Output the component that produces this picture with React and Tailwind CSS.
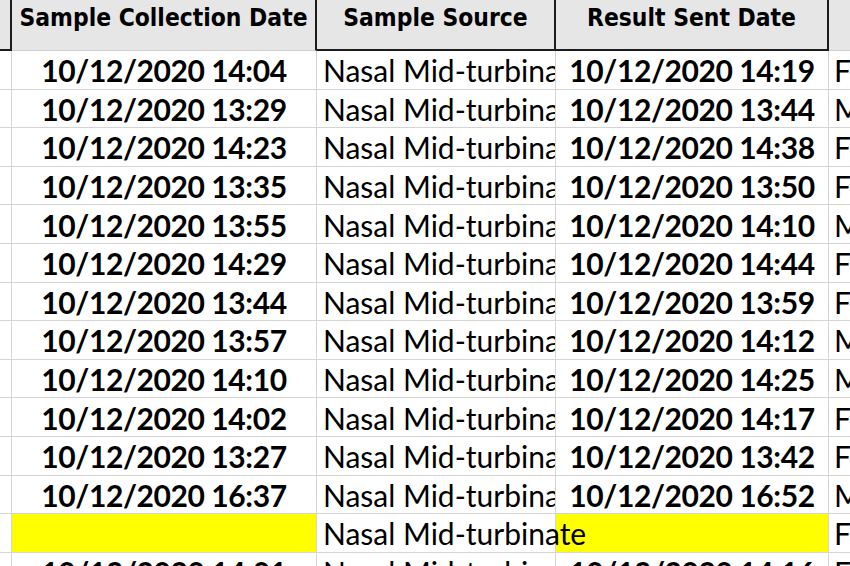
import React from "react";

const rows = [
  { collected: "10/12/2020 14:04", sent: "10/12/2020 14:19", sex: "Female" },
  { collected: "10/12/2020 13:29", sent: "10/12/2020 13:44", sex: "Male" },
  { collected: "10/12/2020 14:23", sent: "10/12/2020 14:38", sex: "Female" },
  { collected: "10/12/2020 13:35", sent: "10/12/2020 13:50", sex: "Female" },
  { collected: "10/12/2020 13:55", sent: "10/12/2020 14:10", sex: "Male" },
  { collected: "10/12/2020 14:29", sent: "10/12/2020 14:44", sex: "Female" },
  { collected: "10/12/2020 13:44", sent: "10/12/2020 13:59", sex: "Female" },
  { collected: "10/12/2020 13:57", sent: "10/12/2020 14:12", sex: "Male" },
  { collected: "10/12/2020 14:10", sent: "10/12/2020 14:25", sex: "Male" },
  { collected: "10/12/2020 14:02", sent: "10/12/2020 14:17", sex: "Female" },
  { collected: "10/12/2020 13:27", sent: "10/12/2020 13:42", sex: "Female" },
  { collected: "10/12/2020 16:37", sent: "10/12/2020 16:52", sex: "Male" },
  { collected: "", sent: "", sex: "Female", missing: true },
  { collected: "10/12/2020 14:01", sent: "10/12/2020 14:16", sex: "Female" },
];

const dataFont = { fontFamily: "Lato, 'Open Sans', sans-serif" };
const headFont = { fontFamily: "'DejaVu Sans Condensed', 'Liberation Sans', sans-serif" };

const Header = () => (
  <div className="flex h-[51px] bg-[#e7e6e6]" style={headFont}>
    <div className="w-[12px] shrink-0 border-r-2 border-b-2 border-[#1c1c1c]" />
    <div className="w-[305px] shrink-0 border-r-2 border-r-[#1c1c1c] border-b border-b-[#cfcfcf] flex justify-center pt-[6px] text-[24.4px] font-bold leading-none text-black">
      Sample Collection Date
    </div>
    <div className="w-[239px] shrink-0 border-r-2 border-b-2 border-[#1c1c1c] flex justify-center pt-[6px] text-[24.4px] font-bold leading-none text-black">
      Sample Source
    </div>
    <div className="w-[273px] shrink-0 border-r-2 border-b-2 border-[#1c1c1c] flex justify-center pt-[6px] text-[24.4px] font-bold leading-none text-black">
      Result Sent Date
    </div>
    <div className="flex-1 border-b border-[#cfcfcf]" />
  </div>
);

const Row = ({ row }) => (
  <div className="flex h-[38.6px] text-black" style={dataFont}>
    <div className="w-[12px] shrink-0 border-r border-b border-[#d4d4d4] bg-white" />
    <div
      className={`w-[305px] shrink-0 border-r border-b border-[#d4d4d4] flex items-center justify-center pt-[2px] text-[30px] tracking-[-0.4px] font-bold ${
        row.missing ? "bg-[#ffff00]" : "bg-white"
      }`}
    >
      {row.collected}
    </div>
    <div className="w-[239px] shrink-0 border-r border-b border-[#d4d4d4] bg-white flex items-center pl-[6px] pt-[2px] text-[30px] whitespace-nowrap">
      <span className={row.missing ? "relative z-10" : "overflow-hidden w-full"}>
        Nasal Mid-turbinate
      </span>
    </div>
    <div
      className={`w-[273px] shrink-0 border-r border-b border-[#d4d4d4] flex items-center justify-center pt-[2px] text-[30px] tracking-[-0.4px] font-bold ${
        row.missing ? "bg-[#ffff00]" : "bg-white"
      }`}
    >
      {row.sent}
    </div>
    <div className="flex-1 overflow-hidden border-b border-[#d4d4d4] bg-white flex items-center pl-[5px] pt-[2px] text-[30px] whitespace-nowrap">
      {row.sex}
    </div>
  </div>
);

const App = () => {
  return (
    <div className="w-[850px] h-[566px] overflow-hidden bg-white">
      <Header />
      {rows.map((row, i) => (
        <Row key={i} row={row} />
      ))}
    </div>
  );
};

export default App;
